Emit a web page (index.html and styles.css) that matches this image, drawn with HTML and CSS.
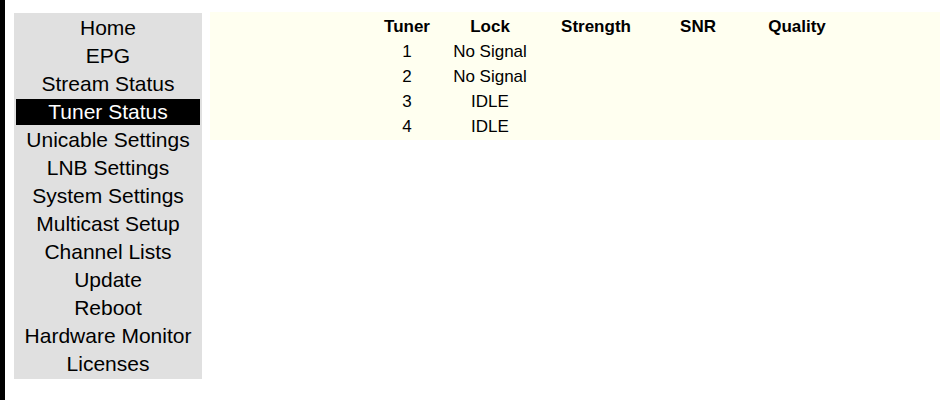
FILE: index.html
```html
<!DOCTYPE html>
<html>
<head>
<meta charset="utf-8">
<title>Tuner Status</title>
<link rel="stylesheet" href="styles.css">
</head>
<body>
<div class="page">
  <div class="edge"></div>
  <nav class="menu">
    <a class="item">Home</a>
    <a class="item">EPG</a>
    <a class="item">Stream Status</a>
    <a class="item active">Tuner Status</a>
    <a class="item">Unicable Settings</a>
    <a class="item">LNB Settings</a>
    <a class="item">System Settings</a>
    <a class="item">Multicast Setup</a>
    <a class="item">Channel Lists</a>
    <a class="item">Update</a>
    <a class="item">Reboot</a>
    <a class="item">Hardware Monitor</a>
    <a class="item">Licenses</a>
  </nav>
  <main class="content">
    <div class="table">
      <div class="row head">
        <span>Tuner</span><span>Lock</span><span>Strength</span><span>SNR</span><span>Quality</span>
      </div>
      <div class="row"><span>1</span><span>No Signal</span><span></span><span></span><span></span></div>
      <div class="row"><span>2</span><span>No Signal</span><span></span><span></span><span></span></div>
      <div class="row"><span>3</span><span>IDLE</span><span></span><span></span><span></span></div>
      <div class="row"><span>4</span><span>IDLE</span><span></span><span></span><span></span></div>
    </div>
  </main>
</div>
</body>
</html>
```
FILE: styles.css
```css
html, body {
  margin: 0;
  padding: 0;
  background: #ffffff;
  font-family: "Liberation Sans", Arial, sans-serif;
  color: #000;
}
.page {
  display: flex;
  align-items: flex-start;
  height: 400px;
}
.edge {
  width: 5px;
  align-self: stretch;
  background: #000;
}
.menu {
  margin: 13px 0 0 9px;
  width: 186px;
  padding: 1px;
  background: #e0e0e0;
  display: flex;
  flex-direction: column;
}
.item {
  display: block;
  height: 26px;
  line-height: 26px;
  border: 1px solid transparent;
  text-align: center;
  font-size: 21px;
  color: #000;
  white-space: nowrap;
}
.item.active {
  background: #000;
  background-clip: padding-box;
  color: #fff;
}
.content {
  flex: 1;
  margin: 12px 0 0 8px;
  padding: 3px 0 1px 157px;
  background: #fffff0;
}
.table {
  display: flex;
  flex-direction: column;
}
.row {
  display: grid;
  grid-template-columns: 80px 86px 126px 78px 120px;
  height: 25px;
  line-height: 25px;
  font-size: 17px;
}
.row span {
  text-align: center;
  white-space: nowrap;
}
.row.head {
  height: 24px;
  line-height: 24px;
  font-weight: bold;
}
```
